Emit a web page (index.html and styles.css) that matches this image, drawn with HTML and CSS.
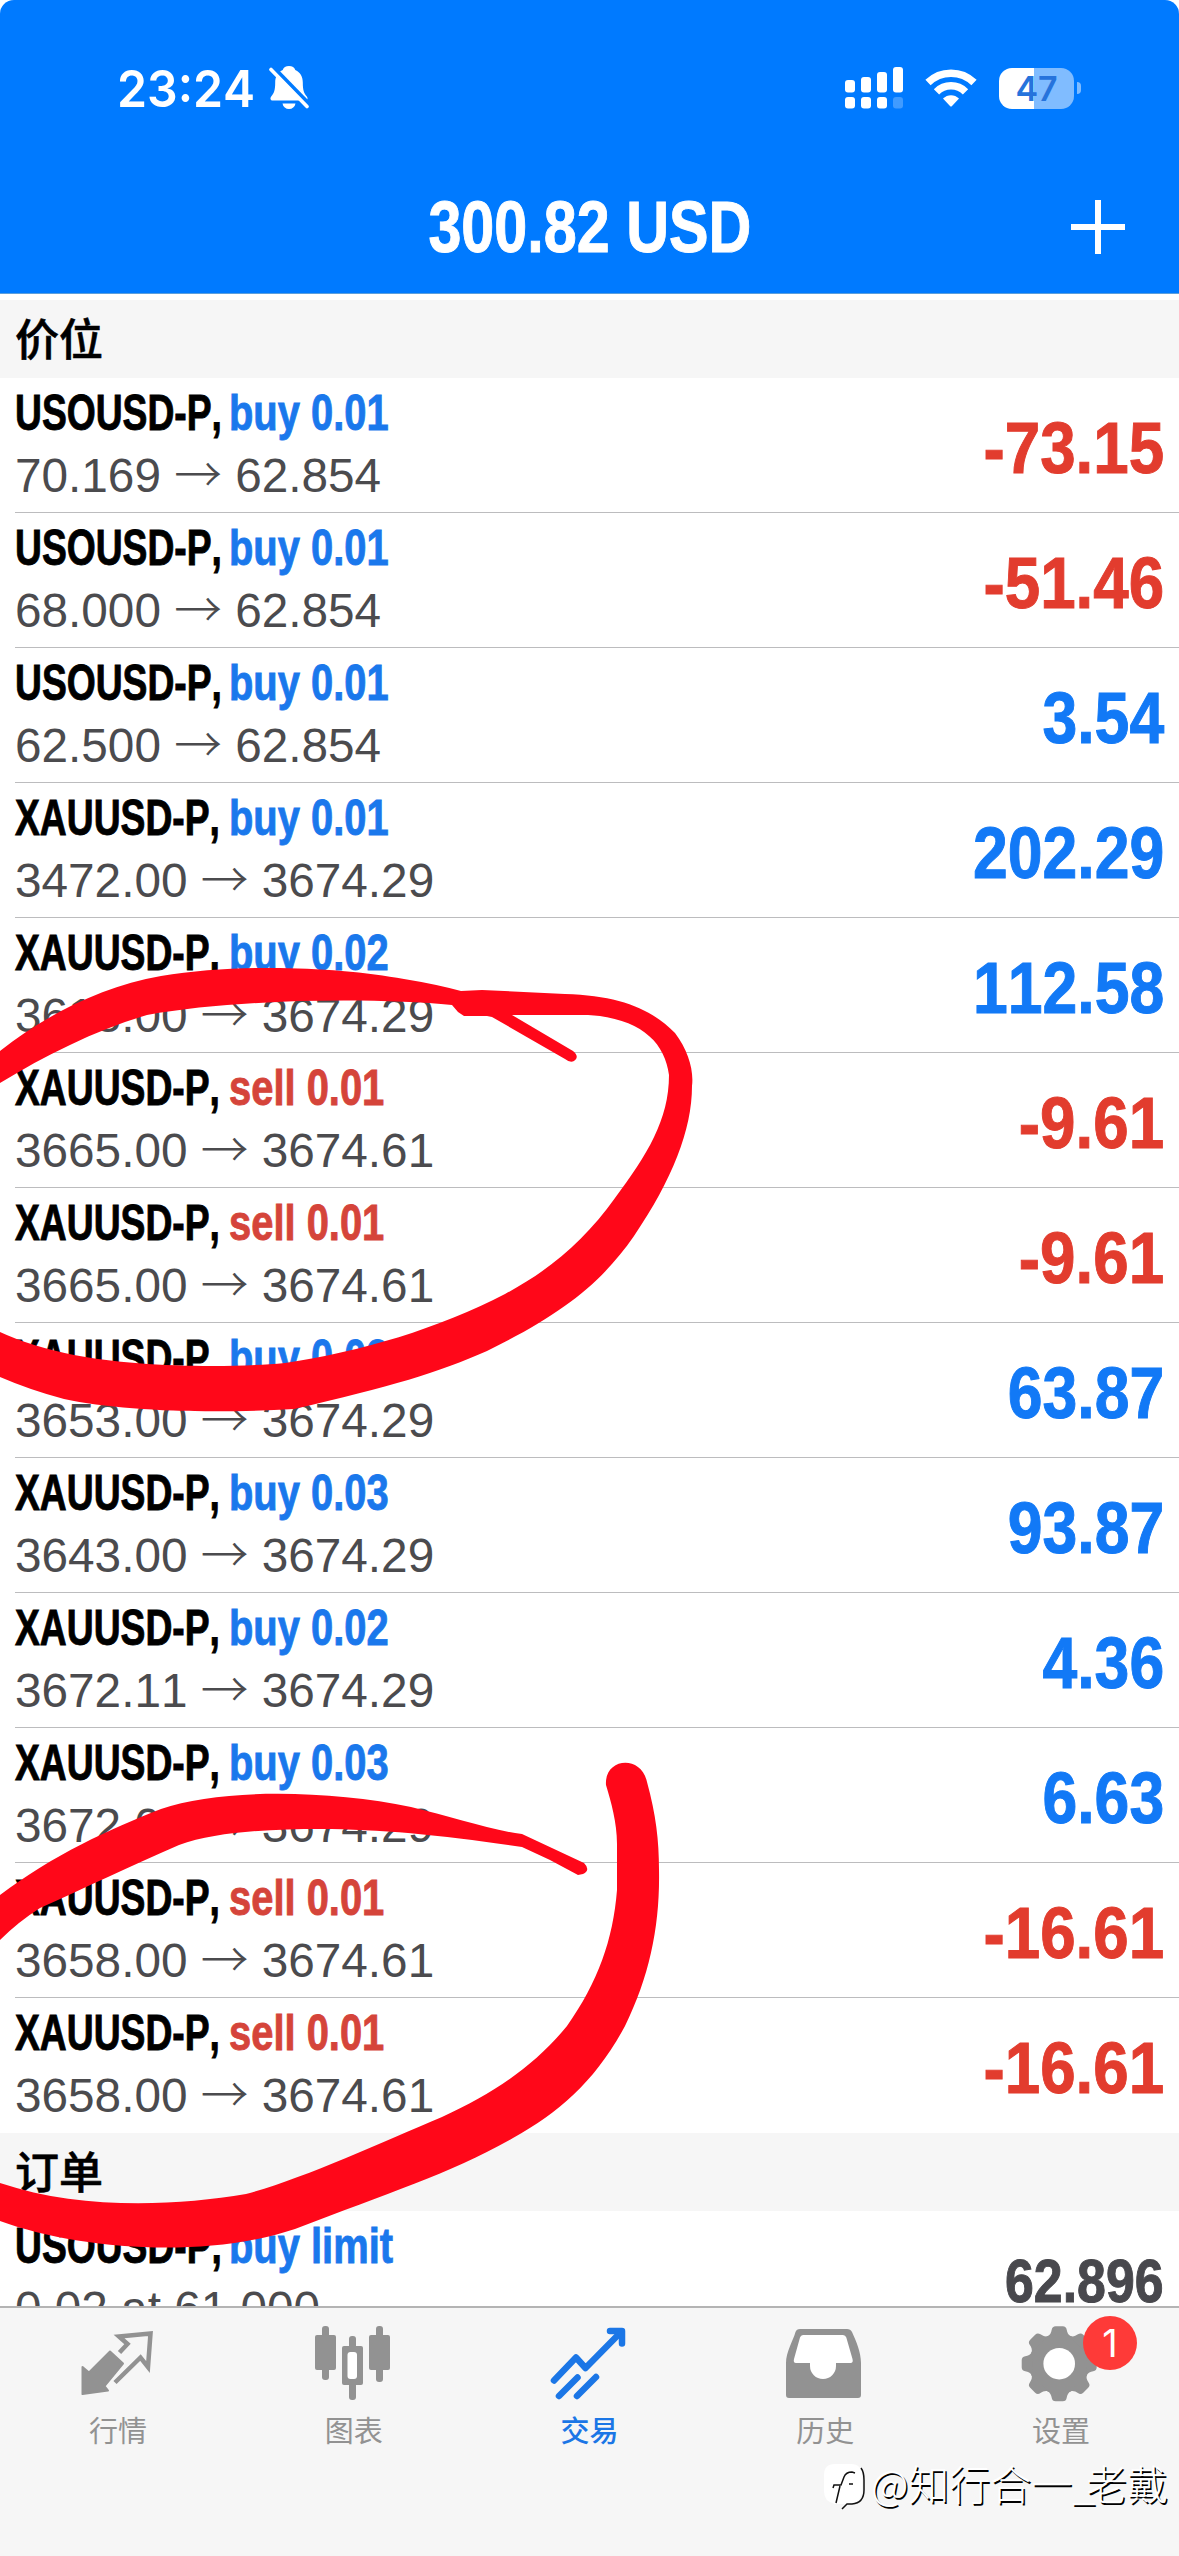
FILE: index.html
```html
<!DOCTYPE html>
<html lang="zh-CN">
<head>
  <meta charset="UTF-8">
  <title>交易</title>
  <link rel="stylesheet" href="styles.css">
</head>
<body>
  <div class="app">
    <header class="header">
      <div class="status">
        <div class="status-left">
          <span class="time">23:24</span>
          <svg class="bell" viewBox="0 0 40 44" width="40" height="44">
            <path d="M20 0c3.300 0 5.500 1.500 6.300 4 5.200 2.300 7.500 7 7.500 12.500 0 8 1.200 10.500 4 14 1.500 2.300.6 4-1.500 4H3.700c-2.100 0-3-1.700-1.500-4 2.800-3.500 4-6 4-14C6.200 11 8.500 6.300 13.700 4 14.500 1.500 16.700 0 20 0z" fill="#fff"/>
            <path d="M13.500 37.500h13c-.7 3.600-3.200 5.500-6.500 5.500s-5.800-1.900-6.500-5.500z" fill="#fff"/>
            <path d="M4.500 1.500l36 37" stroke="#007aff" stroke-width="4"/>
            <path d="M2 3.500l36 37" stroke="#fff" stroke-width="3.600" stroke-linecap="round"/>
          </svg>
        </div>
        <div class="status-right">
          <svg width="59" height="42" viewBox="0 0 59 42" fill="#fff">
            <rect x="0" y="13" width="10" height="12.500" rx="3"/>
            <rect x="16" y="10" width="10" height="15.500" rx="3"/>
            <rect x="32" y="5" width="10" height="20.500" rx="3"/>
            <rect x="48" y="0" width="10" height="25.500" rx="3"/>
            <rect x="0" y="30" width="10" height="11.500" rx="3"/>
            <rect x="16" y="30" width="10" height="11.500" rx="3"/>
            <rect x="32" y="30" width="10" height="11.500" rx="3"/>
            <rect x="48" y="30" width="10" height="11.500" rx="3" opacity=".25"/>
          </svg>
          <svg class="wifi" width="52" height="40" viewBox="0 0 52 40">
            <path d="M3 14.500a33 33 0 0 1 46 0" fill="none" stroke="#fff" stroke-width="7.500"/>
            <path d="M11.500 23.800a20.500 20.500 0 0 1 29 0" fill="none" stroke="#fff" stroke-width="7.500"/>
            <path d="M18 30.500c4.500-4.500 11.500-4.500 16 0L27 38q-1 1-2 0z" fill="#fff"/>
          </svg>
          <div class="battery"><span>47</span></div>
          <i class="battery-tip"></i>
        </div>
      </div>
      <div class="navbar">
        <h1>300.82 USD</h1>
        <svg class="plus" width="54" height="54" viewBox="0 0 54 54">
          <path d="M27 0v54M0 27h54" stroke="#fff" stroke-width="6"/>
        </svg>
      </div>
    </header>

    <main class="list">
      <h2 class="section">价位</h2>
      <div class="row">
        <div>
          <p class="title"><span class="symbol">USOUSD-P,</span><span class="side buy">buy 0.01</span></p>
          <p class="price">70.169 <span class="arrow">→</span> 62.854</p>
        </div>
        <span class="profit minus">-73.15</span>
      </div>
      <div class="row">
        <div>
          <p class="title"><span class="symbol">USOUSD-P,</span><span class="side buy">buy 0.01</span></p>
          <p class="price">68.000 <span class="arrow">→</span> 62.854</p>
        </div>
        <span class="profit minus">-51.46</span>
      </div>
      <div class="row">
        <div>
          <p class="title"><span class="symbol">USOUSD-P,</span><span class="side buy">buy 0.01</span></p>
          <p class="price">62.500 <span class="arrow">→</span> 62.854</p>
        </div>
        <span class="profit">3.54</span>
      </div>
      <div class="row">
        <div>
          <p class="title"><span class="symbol">XAUUSD-P,</span><span class="side buy">buy 0.01</span></p>
          <p class="price">3472.00 <span class="arrow">→</span> 3674.29</p>
        </div>
        <span class="profit">202.29</span>
      </div>
      <div class="row">
        <div>
          <p class="title"><span class="symbol">XAUUSD-P,</span><span class="side buy">buy 0.02</span></p>
          <p class="price">3618.00 <span class="arrow">→</span> 3674.29</p>
        </div>
        <span class="profit">112.58</span>
      </div>
      <div class="row">
        <div>
          <p class="title"><span class="symbol">XAUUSD-P,</span><span class="side sell">sell 0.01</span></p>
          <p class="price">3665.00 <span class="arrow">→</span> 3674.61</p>
        </div>
        <span class="profit minus">-9.61</span>
      </div>
      <div class="row">
        <div>
          <p class="title"><span class="symbol">XAUUSD-P,</span><span class="side sell">sell 0.01</span></p>
          <p class="price">3665.00 <span class="arrow">→</span> 3674.61</p>
        </div>
        <span class="profit minus">-9.61</span>
      </div>
      <div class="row">
        <div>
          <p class="title"><span class="symbol">XAUUSD-P,</span><span class="side buy">buy 0.03</span></p>
          <p class="price">3653.00 <span class="arrow">→</span> 3674.29</p>
        </div>
        <span class="profit">63.87</span>
      </div>
      <div class="row">
        <div>
          <p class="title"><span class="symbol">XAUUSD-P,</span><span class="side buy">buy 0.03</span></p>
          <p class="price">3643.00 <span class="arrow">→</span> 3674.29</p>
        </div>
        <span class="profit">93.87</span>
      </div>
      <div class="row">
        <div>
          <p class="title"><span class="symbol">XAUUSD-P,</span><span class="side buy">buy 0.02</span></p>
          <p class="price">3672.11 <span class="arrow">→</span> 3674.29</p>
        </div>
        <span class="profit">4.36</span>
      </div>
      <div class="row">
        <div>
          <p class="title"><span class="symbol">XAUUSD-P,</span><span class="side buy">buy 0.03</span></p>
          <p class="price">3672.08 <span class="arrow">→</span> 3674.29</p>
        </div>
        <span class="profit">6.63</span>
      </div>
      <div class="row">
        <div>
          <p class="title"><span class="symbol">XAUUSD-P,</span><span class="side sell">sell 0.01</span></p>
          <p class="price">3658.00 <span class="arrow">→</span> 3674.61</p>
        </div>
        <span class="profit minus">-16.61</span>
      </div>
      <div class="row last">
        <div>
          <p class="title"><span class="symbol">XAUUSD-P,</span><span class="side sell">sell 0.01</span></p>
          <p class="price">3658.00 <span class="arrow">→</span> 3674.61</p>
        </div>
        <span class="profit minus">-16.61</span>
      </div>
      <h2 class="section">订单</h2>
      <div class="row last">
        <div>
          <p class="title"><span class="symbol">USOUSD-P,</span><span class="side buy">buy limit</span></p>
          <p class="price">0.02 at 61.000</p>
        </div>
        <span class="profit quote">62.896</span>
      </div>
    </main>

    <nav class="tabbar">
      <a class="tab">
        <svg width="96" height="84" viewBox="0 0 96 84">
          <path d="M12.500 47l6.500 5.500L40 31.500l13 12L34.500 66l3.500 4.500-25.500 3.500z" fill="#929292" stroke="#929292" stroke-width="2" stroke-linejoin="round"/>
          <path d="M49.500 32.500l8-8.500-8.500-7.500 31.500-3-2.500 33.500-7.500-9.500L45 62.500" fill="none" stroke="#929292" stroke-width="4.500"/>
        </svg>
        <span>行情</span>
      </a>
      <a class="tab">
        <svg width="96" height="84" viewBox="0 0 96 84" fill="#929292">
          <rect x="9" y="15" width="21" height="35" rx="2"/>
          <rect x="16" y="6" width="7" height="54" rx="3"/>
          <rect x="43" y="16" width="7" height="64" rx="3"/>
          <rect x="36" y="26" width="21" height="39" rx="2"/>
          <rect x="41.500" y="32" width="9.500" height="27" rx="3" fill="#fff"/>
          <rect x="63" y="15" width="21" height="35" rx="2"/>
          <rect x="70" y="6" width="7" height="56" rx="3"/>
        </svg>
        <span>图表</span>
      </a>
      <a class="tab active">
        <svg width="96" height="84" viewBox="0 0 96 84" fill="none" stroke="#1b76e6" stroke-width="6.500" stroke-linecap="round" stroke-linejoin="round">
          <path d="M13 60.500l22-23 9.500 10.500L80 12"/>
          <path d="M69 11h12v12.500M18 76l18.500-18.500M36 76l19-19"/>
        </svg>
        <span>交易</span>
      </a>
      <a class="tab">
        <svg width="96" height="84" viewBox="0 0 96 84">
          <path d="M9 43C9 32 16 21 18.500 12q1-3 4.500-3h47q3.500 0 5 3C79 21 84 32 84 43v32q0 3-3 3H12q-3 0-3-3z" fill="#929292"/>
          <path d="M26 15h40q2.500 0 3.300 2.500L75.500 39q1 4-2 4H59v3a13 13 0 0 1-26 0v-3H19q-3 0-2-4l6-21.500Q23.800 15 26 15z" fill="#fff"/>
        </svg>
        <span>历史</span>
      </a>
      <a class="tab">
        <svg width="96" height="84" viewBox="0 0 96 84">
          <g transform="translate(46.200 43.700)" fill="#929292">
            <circle r="30"/>
            <g id="teeth">
              <path id="tooth" d="M-12-27c3-2 4-4 4.500-7q.5-3.500 4-3.500h7q3.500 0 4 3.500c.5 3 1.500 5 4.500 7z"/>
              <use href="#tooth" transform="rotate(90)"/>
              <use href="#tooth" transform="rotate(180)"/>
              <use href="#tooth" transform="rotate(270)"/>
            </g>
            <use href="#teeth" transform="rotate(45)"/>
            <circle r="15.800" fill="#fff"/>
          </g>
        </svg>
        <span>设置</span>
        <b class="badge">1</b>
      </a>
    </nav>

    <!-- red marker circles over the list -->
    <svg class="marker" width="1179" height="2556" viewBox="0 0 1179 2556">
      <path d="M-3 1053L0 1051C46 1015 100 987 161 976C240 963 340 967 404 979Q435 984 461 991L482 990L565 994C620 996 650 1008 675 1033C688 1050 694 1070 692 1086C692 1130 672 1180 634 1236C600 1285 560 1315 487 1351C440 1372 390 1387 294 1409C210 1414 120 1411 64 1399Q30 1390 0 1377L-3 1376V1330L0 1332Q30 1346 74 1355C130 1366 220 1369 285 1363C360 1352 440 1328 505 1294C550 1270 585 1240 615 1198C647 1155 669 1120 669 1075C665 1042 640 1018 588 1015H512L573 1051Q580 1057 574 1061Q570 1063 565 1059L492 1017L487 1016H464L458 1012L452 1005C380 998 240 998 147 1015C96 1030 46 1055 0 1083H-3z"/>
      <path d="M-3 1898L0 1895C53 1855 110 1829 161 1809C220 1788 330 1790 411 1807C450 1816 490 1830 522 1834L584 1863Q591 1870 583 1874L578 1875L550 1860L522 1847C450 1836 380 1829 321 1829C268 1829 215 1832 179 1845C130 1866 85 1888 40 1908Q18 1922 0 1940H-3z"/>
      <path d="M606 1785C604 1758 641 1754 647 1782C656 1815 659 1840 659 1870C660 1925 650 1975 625 2026C596 2080 560 2112 513 2138C450 2174 390 2192 295 2229C205 2259 80 2250 0 2221H-3V2182L0 2183C80 2210 175 2206 246 2194C300 2180 380 2143 442 2117C495 2093 535 2065 567 2026C598 1982 613 1940 617 1890V1844C617 1822 611 1802 606 1785z"/>
    </svg>

    <div class="watermark">
      <svg width="42" height="52" viewBox="0 0 42 52">
        <path d="M12 3h16q11 0 11 12v14q0 10-9 14H12Q1 41 1 30V14Q1 3 12 3z" fill="#fff"/>
        <path d="M38 7q3 4 3 12v10q0 13-12 14h-5l-5 5" fill="none" stroke="#111" stroke-width="1.500"/>
        <path d="M10 27l1-3h7l3-8q2-5 8-5l3 1M17 25l-4 17M26 23h4" fill="none" stroke="#111" stroke-width="1.500"/>
      </svg>
      <span>@知行合一<i>_</i>老戴</span>
    </div>
  </div>
</body>
</html>
```
FILE: styles.css
```css
* {
  box-sizing: border-box;
}

body {
  margin: 0;
  background-color: #fff;
  font-family: "Liberation Sans", "Noto Sans CJK SC", sans-serif;
  font-kerning: none;
}

h1, h2, p {
  margin: 0;
}

.app {
  position: relative;
  display: flex;
  flex-direction: column;
  width: 1179px;
  height: 2556px;
  overflow: hidden;
}

.header {
  flex: none;
  height: 294px;
  background-color: #007aff;
  border-bottom: 1px solid #5c9fdc;
  border-radius: 14px 14px 0 0;
  color: #fff;
}

.status {
  display: flex;
  justify-content: space-between;
  align-items: center;
  height: 160px;
  padding: 16px 98px 0 117px;
}

.status-left, .status-right {
  display: flex;
  align-items: center;
}

.time {
  width: 152px;
  font-family: Inter, sans-serif;
  font-size: 51px;
  font-weight: 600;
  white-space: nowrap;
  transform: scaleX(.945);
  transform-origin: left;
}

.wifi {
  margin: 0 22px 0 21px;
}

.battery {
  width: 75px;
  height: 41px;
  border-radius: 13px;
  background: linear-gradient(to right, #fff 35px, #80bcff 35px);
  color: #2673dc;
  font: 600 34px/41px Inter, sans-serif;
  text-align: center;
}

.battery-tip {
  width: 4px;
  height: 12px;
  margin-left: 3px;
  border-radius: 0 4px 4px 0;
  background-color: #80bcff;
}

.navbar {
  display: grid;
  grid-template-columns: 1fr auto 1fr;
  align-items: center;
  height: 133px;
  padding-right: 54px;
  padding-left: 54px;
}

.navbar h1 {
  grid-column: 2;
  font-size: 73px;
  line-height: 80px;
  -webkit-text-stroke: 1px;
  transform: scaleX(.812);
}

.plus {
  justify-self: end;
}

.list {
  flex: 1;
  min-height: 0;
  padding-top: 6px;
  overflow: hidden;
}

.section {
  height: 78px;
  padding-left: 15px;
  background-color: #f6f6f6;
  font: 500 44px/75px "Noto Sans CJK SC", sans-serif;
  -webkit-text-stroke: .6px;
}

.row {
  display: flex;
  justify-content: space-between;
  height: 135px;
  margin-left: 15px;
  padding: 4px 15px 0 0;
  border-bottom: 1px solid #bcbcbe;
}

.row.last {
  border-bottom-color: transparent;
}

.title {
  display: flex;
  height: 62px;
  font-size: 50px;
  font-weight: bold;
  line-height: 62px;
  white-space: nowrap;
  -webkit-text-stroke: .9px;
}

.symbol {
  width: 214px;
  transform: scaleX(.745);
  transform-origin: left;
}

.side {
  transform: scaleX(.798);
  transform-origin: left;
}

.sell {
  color: #d5443a;
}

.buy {
  color: #1a78ec;
}

.price {
  color: #4b4b4e;
  font-size: 48px;
  line-height: 64px;
  white-space: nowrap;
  transform: scaleX(.994);
  transform-origin: left;
}

.arrow {
  font-family: "Noto Sans CJK SC", sans-serif;
  font-weight: 300;
  line-height: 0;
}

.profit {
  color: #1279f6;
  font-size: 72px;
  font-weight: bold;
  line-height: 132px;
  -webkit-text-stroke: 1px;
  transform: scaleX(.868);
  transform-origin: right;
}

.profit.minus {
  color: #e23c2e;
  transform: scaleX(.885);
}

.profit.quote {
  color: #48484d;
  font-size: 61px;
  transform: scaleX(.85);
}

.tabbar {
  flex: none;
  display: flex;
  height: 250px;
  border-top: 2px solid #b4b4b4;
  background-color: #f6f6f6;
}

.tab {
  position: relative;
  flex: 1;
  display: flex;
  flex-direction: column;
  align-items: center;
  padding-top: 12px;
  color: #929292;
  font: 400 29px/51px "Noto Sans CJK SC", sans-serif;
}

.tab.active {
  color: #1b76e6;
  font-weight: 500;
}

.badge {
  position: absolute;
  top: 8px;
  right: 42px;
  width: 54px;
  height: 54px;
  border-radius: 50%;
  background-color: #fe3a38;
  color: #fff;
  font: 400 38px/54px Inter, sans-serif;
  text-align: center;
}

.marker {
  position: absolute;
  top: 0;
  left: 0;
  fill: #ff0719;
}

.watermark {
  position: absolute;
  right: 11px;
  bottom: 41px;
  display: flex;
  align-items: center;
  gap: 6px;
  color: #fff;
  font: 300 41px/66px "Noto Sans CJK SC", sans-serif;
  text-shadow: 1.5px 1.5px 0 #000;
}

.watermark svg {
  margin-top: 10px;
}

.watermark i {
  font-style: normal;
  letter-spacing: -9px;
}
```
